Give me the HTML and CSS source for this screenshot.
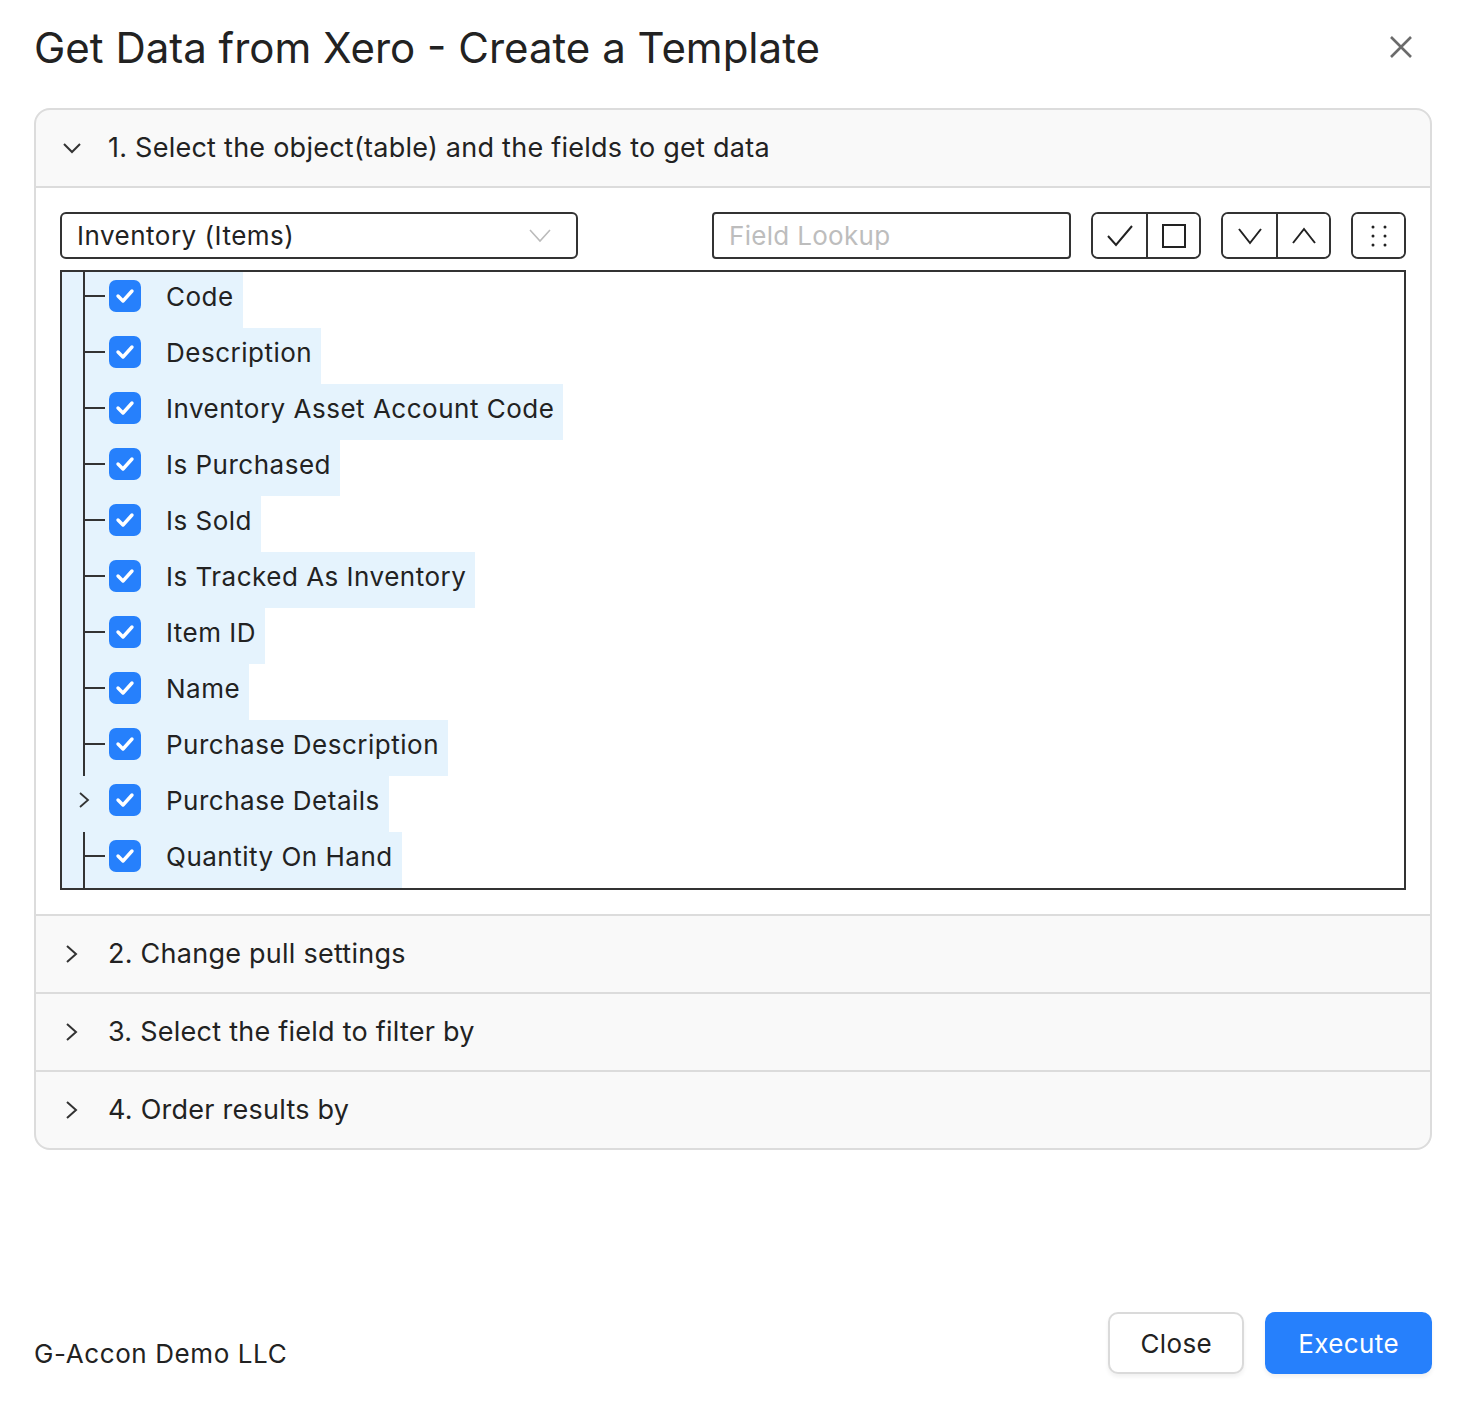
FILE: index.html
```html
<!DOCTYPE html>
<html lang="en">
<head>
    <meta charset="UTF-8">
    <title>Get Data from Xero - Create a Template</title>
    <link rel="stylesheet" href="styles.css">
</head>
<body>
    <div class="dialog">
        <div class="dialog-head">
            <h1>Get Data from Xero - Create a Template</h1>
            <button class="close-x" aria-label="Close">
                <svg width="24" height="24" viewBox="0 0 24 24"><path d="M2 2L22 22M22 2L2 22" stroke="#6b6b6b" stroke-width="2.6" fill="none"/></svg>
            </button>
        </div>

        <div class="accordion">
            <div class="panel open">
                <div class="panel-head">
                    <svg class="chev" width="20" height="20" viewBox="0 0 20 20"><path d="M2 6L10 14L18 6" stroke="#333" stroke-width="2" fill="none"/></svg>
                    <span>1. Select the object(table) and the fields to get data</span>
                </div>
                <div class="panel-body">
                    <div class="toolbar">
                        <div class="select">
                            <span>Inventory (Items)</span>
                            <svg width="22" height="14" viewBox="0 0 22 14"><path d="M1 1L11 12L21 1" stroke="#bbb" stroke-width="1.6" fill="none"/></svg>
                        </div>
                        <div class="tools">
                            <input class="lookup" type="text" placeholder="Field Lookup">
                            <div class="btn-group">
                                <button><svg width="28" height="24" viewBox="0 0 28 24"><path d="M2 12L10 21L26 2" stroke="#222" stroke-width="2" fill="none"/></svg></button>
                                <button><svg width="26" height="26" viewBox="0 0 26 26"><rect x="2" y="2" width="22" height="22" stroke="#222" stroke-width="2" fill="none"/></svg></button>
                            </div>
                            <div class="btn-group">
                                <button><svg width="26" height="18" viewBox="0 0 26 18"><path d="M2 2L13 16L24 2" stroke="#222" stroke-width="2" fill="none"/></svg></button>
                                <button><svg width="26" height="18" viewBox="0 0 26 18"><path d="M2 16L13 2L24 16" stroke="#222" stroke-width="2" fill="none"/></svg></button>
                            </div>
                            <div class="btn-group dots">
                                <button><svg width="16" height="22" viewBox="0 0 16 22" fill="#222"><circle cx="2" cy="2" r="1.5"/><circle cx="14" cy="2" r="1.5"/><circle cx="2" cy="11" r="1.5"/><circle cx="14" cy="11" r="1.5"/><circle cx="2" cy="20" r="1.5"/><circle cx="14" cy="20" r="1.5"/></svg></button>
                            </div>
                        </div>
                    </div>

                    <ul class="tree">
                        <li class="node"><span class="branch"></span><span class="check"><svg width="20" height="16" viewBox="0 0 20 16"><path d="M3 8L8 13L17 3" stroke="#fff" stroke-width="3.4" fill="none" stroke-linecap="round" stroke-linejoin="round"/></svg></span><span class="label">Code</span></li>
                        <li class="node"><span class="branch"></span><span class="check"><svg width="20" height="16" viewBox="0 0 20 16"><path d="M3 8L8 13L17 3" stroke="#fff" stroke-width="3.4" fill="none" stroke-linecap="round" stroke-linejoin="round"/></svg></span><span class="label">Description</span></li>
                        <li class="node"><span class="branch"></span><span class="check"><svg width="20" height="16" viewBox="0 0 20 16"><path d="M3 8L8 13L17 3" stroke="#fff" stroke-width="3.4" fill="none" stroke-linecap="round" stroke-linejoin="round"/></svg></span><span class="label">Inventory Asset Account Code</span></li>
                        <li class="node"><span class="branch"></span><span class="check"><svg width="20" height="16" viewBox="0 0 20 16"><path d="M3 8L8 13L17 3" stroke="#fff" stroke-width="3.4" fill="none" stroke-linecap="round" stroke-linejoin="round"/></svg></span><span class="label">Is Purchased</span></li>
                        <li class="node"><span class="branch"></span><span class="check"><svg width="20" height="16" viewBox="0 0 20 16"><path d="M3 8L8 13L17 3" stroke="#fff" stroke-width="3.4" fill="none" stroke-linecap="round" stroke-linejoin="round"/></svg></span><span class="label">Is Sold</span></li>
                        <li class="node"><span class="branch"></span><span class="check"><svg width="20" height="16" viewBox="0 0 20 16"><path d="M3 8L8 13L17 3" stroke="#fff" stroke-width="3.4" fill="none" stroke-linecap="round" stroke-linejoin="round"/></svg></span><span class="label">Is Tracked As Inventory</span></li>
                        <li class="node"><span class="branch"></span><span class="check"><svg width="20" height="16" viewBox="0 0 20 16"><path d="M3 8L8 13L17 3" stroke="#fff" stroke-width="3.4" fill="none" stroke-linecap="round" stroke-linejoin="round"/></svg></span><span class="label">Item ID</span></li>
                        <li class="node"><span class="branch"></span><span class="check"><svg width="20" height="16" viewBox="0 0 20 16"><path d="M3 8L8 13L17 3" stroke="#fff" stroke-width="3.4" fill="none" stroke-linecap="round" stroke-linejoin="round"/></svg></span><span class="label">Name</span></li>
                        <li class="node"><span class="branch"></span><span class="check"><svg width="20" height="16" viewBox="0 0 20 16"><path d="M3 8L8 13L17 3" stroke="#fff" stroke-width="3.4" fill="none" stroke-linecap="round" stroke-linejoin="round"/></svg></span><span class="label">Purchase Description</span></li>
                        <li class="node"><span class="branch toggle"><svg width="12" height="18" viewBox="0 0 12 18"><path d="M2 2L10 9L2 16" stroke="#333" stroke-width="1.8" fill="none"/></svg></span><span class="check"><svg width="20" height="16" viewBox="0 0 20 16"><path d="M3 8L8 13L17 3" stroke="#fff" stroke-width="3.4" fill="none" stroke-linecap="round" stroke-linejoin="round"/></svg></span><span class="label">Purchase Details</span></li>
                        <li class="node"><span class="branch"></span><span class="check"><svg width="20" height="16" viewBox="0 0 20 16"><path d="M3 8L8 13L17 3" stroke="#fff" stroke-width="3.4" fill="none" stroke-linecap="round" stroke-linejoin="round"/></svg></span><span class="label">Quantity On Hand</span></li>
                    </ul>
                </div>
            </div>

            <div class="panel">
                <div class="panel-head">
                    <svg class="chev" width="20" height="20" viewBox="0 0 20 20"><path d="M5 2L14 10L5 18" stroke="#333" stroke-width="2" fill="none"/></svg>
                    <span>2. Change pull settings</span>
                </div>
            </div>
            <div class="panel">
                <div class="panel-head">
                    <svg class="chev" width="20" height="20" viewBox="0 0 20 20"><path d="M5 2L14 10L5 18" stroke="#333" stroke-width="2" fill="none"/></svg>
                    <span>3. Select the field to filter by</span>
                </div>
            </div>
            <div class="panel">
                <div class="panel-head">
                    <svg class="chev" width="20" height="20" viewBox="0 0 20 20"><path d="M5 2L14 10L5 18" stroke="#333" stroke-width="2" fill="none"/></svg>
                    <span>4. Order results by</span>
                </div>
            </div>
        </div>

        <div class="dialog-foot">
            <div class="company">G-Accon Demo LLC</div>
            <div class="actions">
                <button class="btn">Close</button>
                <button class="btn primary">Execute</button>
            </div>
        </div>
    </div>
</body>
</html>
```

FILE: styles.css
```css
body {
    margin: 0;
    background: #fff;
    color: #222;
    font-family: Inter, "Noto Sans", sans-serif;
}
.dialog {
    box-sizing: border-box;
    height: 1428px;
    padding: 0 50px 54px 34px;
    display: flex;
    flex-direction: column;
}
.dialog-head {
    display: flex;
    align-items: center;
    justify-content: space-between;
    height: 94px;
    margin-bottom: 14px;
}
.dialog-head h1 {
    margin: 0;
    font-size: 42px;
    font-weight: 400;
    color: #222;
}
.close-x {
    background: none;
    border: none;
    padding: 0;
    margin-right: 19px;
    display: flex;
}
.accordion {
    border: 2px solid #dcdcdc;
    border-radius: 16px;
    overflow: hidden;
    background: #f9f9f9;
}
.panel + .panel {
    border-top: 2px solid #dcdcdc;
}
.panel-head {
    box-sizing: border-box;
    height: 76px;
    display: flex;
    align-items: center;
    padding: 0 0 1px 26px;
    font-size: 27px;
    letter-spacing: 0.25px;
    color: #222;
}
.panel-head .chev {
    margin-right: 26px;
}
.panel.open .panel-head {
    border-bottom: 2px solid #dcdcdc;
    height: 78px;
}
.panel-body {
    background: #fff;
    padding: 24px 24px 24px 24px;
}
.toolbar {
    display: flex;
    justify-content: space-between;
    margin-bottom: 11px;
}
.select {
    box-sizing: border-box;
    width: 518px;
    height: 47px;
    border: 2px solid #333;
    border-radius: 6px;
    display: flex;
    align-items: center;
    justify-content: space-between;
    padding: 0 25px 0 15px;
    font-size: 26px;
    letter-spacing: 0.5px;
}
.tools {
    display: flex;
    gap: 20px;
}
.lookup {
    box-sizing: border-box;
    width: 359px;
    height: 47px;
    border: 2px solid #333;
    border-radius: 4px;
    padding: 0 15px;
    font-family: inherit;
    font-size: 26px;
    letter-spacing: 0.3px;
    color: #222;
    outline: none;
}
.lookup::placeholder {
    color: #bdbdbd;
}
.btn-group {
    display: flex;
    height: 47px;
    border: 2px solid #333;
    border-radius: 7px;
    box-sizing: border-box;
    overflow: hidden;
}
.btn-group button {
    width: 53px;
    background: #fff;
    border: none;
    padding: 0;
    display: flex;
    align-items: center;
    justify-content: center;
}
.btn-group button + button {
    border-left: 2px solid #333;
}
.btn-group.dots button {
    width: 51px;
}
.tree {
    list-style: none;
    margin: 0;
    padding: 0;
    border: 2px solid #333;
}
.node {
    box-sizing: border-box;
    display: flex;
    align-items: center;
    width: fit-content;
    height: 56px;
    padding: 0 9px 8px 0;
    background: #e5f3fd;
}
.branch {
    align-self: stretch;
    width: 47px;
    margin-bottom: -8px;
    background:
        linear-gradient(#333, #333) 21px 0 / 2px 100% no-repeat,
        linear-gradient(#333, #333) 23px 23px / 20px 2px no-repeat;
}
.branch.toggle {
    background: none;
    display: flex;
    align-items: center;
    padding: 0 0 8px 16px;
    box-sizing: border-box;
}
.check {
    width: 32px;
    height: 32px;
    border-radius: 7px;
    background: #2680fc;
    display: flex;
    align-items: center;
    justify-content: center;
    margin-right: 25px;
}
.label {
    font-size: 26px;
    letter-spacing: 0.5px;
    color: #222;
}
.dialog-foot {
    margin-top: auto;
    display: flex;
    justify-content: space-between;
    align-items: flex-end;
}
.company {
    font-size: 26px;
    letter-spacing: 0.6px;
    margin-bottom: 5px;
}
.actions {
    display: flex;
    gap: 21px;
}
.btn {
    height: 62px;
    padding: 0 30px;
    border: 2px solid #dadada;
    border-radius: 10px;
    background: #fff;
    font-family: inherit;
    font-size: 26px;
    letter-spacing: 0.4px;
    color: #222;
    box-shadow: 0 3px 4px rgba(0, 0, 0, 0.06);
}
.btn.primary {
    background: #2680fc;
    border-color: #2680fc;
    color: #fff;
    padding: 0 31px;
}
```
